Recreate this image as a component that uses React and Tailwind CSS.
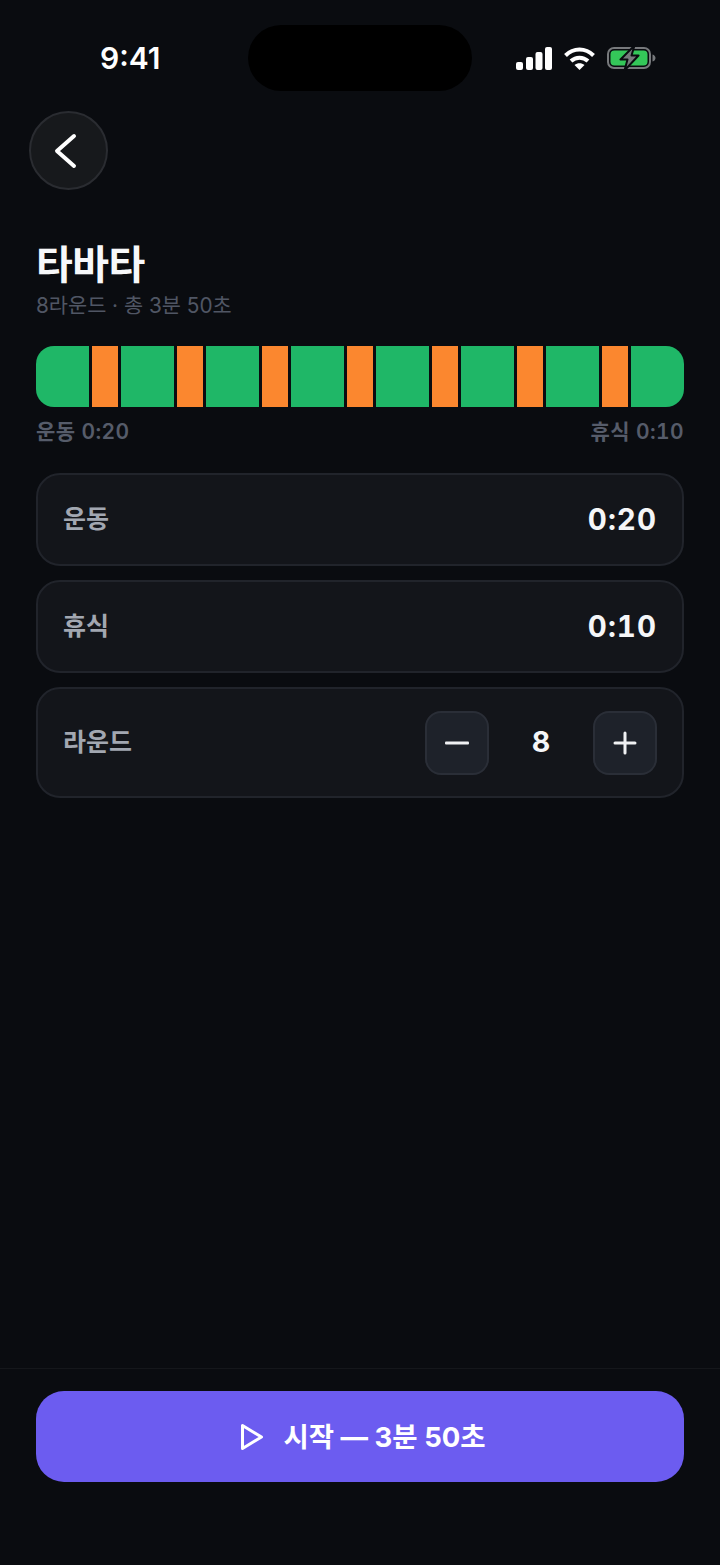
const font = { fontFamily: '"Inter","Noto Sans CJK KR",sans-serif' };

function Signal() {
  return (
    <svg width="36" height="23" viewBox="0 0 36 23" fill="#fff">
      <rect x="0" y="15" width="7" height="8" rx="2" />
      <rect x="10" y="10" width="7" height="13" rx="2" />
      <rect x="19.5" y="5" width="7" height="18" rx="2" />
      <rect x="29" y="0" width="7" height="23" rx="2" />
    </svg>
  );
}

function Wifi() {
  return (
    <svg width="31" height="23" viewBox="0 0 31 23" fill="none" stroke="#fff" strokeWidth="4">
      <path d="M1.5 8.5C9.5 0.5 21.5 0.5 29.5 8.5" />
      <path d="M7 14C12 9.5 19 9.500 24 14" />
      <path d="M15.500 23L10.500 18C13.500 15.800 17.500 15.800 20.500 18Z" fill="#fff" stroke="none" />
    </svg>
  );
}

function Battery() {
  return (
    <svg width="49" height="26" viewBox="0 0 49 26" fill="none">
      <rect x="1" y="3" width="42" height="20" rx="6" stroke="#77797c" strokeWidth="2" />
      <rect x="3.500" y="5.500" width="37" height="15" rx="4" fill="#34c759" />
      <path d="M45.500 9.500C47.500 10 48.500 11.500 48.500 13C48.500 14.500 47.500 16 45.500 16.500Z" fill="#77797c" />
      <path d="M27.500 0.500L13.500 14.500H20.500L17.500 25.500L31.500 10.500H24.500Z" fill="#77797c" stroke="#0a0c10" strokeWidth="2" strokeLinejoin="round" />
    </svg>
  );
}

function Row({ label, value }) {
  return (
    <div className="h-[93px] rounded-[24px] border-2 border-[#21242b] bg-[#13151a] px-[25px] flex items-center justify-between">
      <span className="text-[25px] font-semibold text-[#a2a7b1]">{label}</span>
      <span className="text-[29.5px] font-bold text-[#f5f6f8] tabular-nums tracking-[1px]">{value}</span>
    </div>
  );
}

function StepButton({ children }) {
  return (
    <button className="w-[64px] h-[64px] rounded-[16px] border-2 border-[#2a2e37] bg-[#1e222a] flex items-center justify-center">
      {children}
    </button>
  );
}

const segments = [2, 1, 2, 1, 2, 1, 2, 1, 2, 1, 2, 1, 2, 1, 2];

export default function App() {
  return (
    <div className="w-[720px] h-[1565px] bg-[#0a0c10] flex flex-col overflow-hidden" style={font}>
      <div className="h-[66px] mt-[25px] shrink-0 flex items-center pl-[100px]">
        <span className="text-[30px] font-semibold text-white w-[148px]">9:41</span>
        <div className="w-[224px] h-[66px] rounded-[33px] bg-black" />
        <div className="flex items-center gap-[12px] ml-[44px]">
          <Signal />
          <Wifi />
          <Battery />
        </div>
      </div>

      <div className="flex-1 flex flex-col">
        <button className="ml-[29px] mt-[20px] w-[79px] h-[79px] rounded-full border-2 border-[#2a2c31] bg-[#17191c] flex items-center justify-center">
          <svg width="26" height="36" viewBox="0 0 26 36" fill="none" stroke="#fff" strokeWidth="4" strokeLinecap="round" strokeLinejoin="round" className="-ml-[5px]">
            <path d="M21 3L4 18L21 33" />
          </svg>
        </button>

        <div className="px-[36px]">
          <h1 className="mt-[47px] text-[40px] leading-[56px] font-bold text-[#f7f8fa] tracking-[-0.5px]">타바타</h1>
          <p className="-mt-[1px] text-[20.8px] leading-[28px] text-[#505664]">8라운드 · 총 3분 50초</p>

          <div className="mt-[26px] h-[61px] rounded-[18px] overflow-hidden flex gap-[3px]">
            {segments.map((s, i) => (
              <div key={i} className={s === 2 ? "flex-[2] bg-[#1fb767]" : "flex-[1] bg-[#fb872f]"} />
            ))}
          </div>
          <div className="mt-[10px] flex justify-between text-[21px] leading-[30px] font-semibold text-[#565c6a] tabular-nums tracking-[0.4px]">
            <span>운동 0:20</span>
            <span>휴식 0:10</span>
          </div>

          <div className="mt-[26px] flex flex-col gap-[14px]">
            <Row label="운동" value="0:20" />
            <Row label="휴식" value="0:10" />
            <div className="h-[111px] rounded-[24px] border-2 border-[#21242b] bg-[#13151a] px-[25px] flex items-center justify-between">
              <span className="text-[25px] font-semibold text-[#a2a7b1]">라운드</span>
              <div className="flex items-center">
                <StepButton>
                  <svg width="24" height="4" viewBox="0 0 24 4"><rect width="24" height="3" y="0.5" rx="1" fill="#f0f1f3" /></svg>
                </StepButton>
                <span className="w-[104px] text-center text-[28.5px] font-bold text-[#f5f6f8]">8</span>
                <StepButton>
                  <svg width="24" height="24" viewBox="0 0 24 24" fill="none" stroke="#f0f1f3" strokeWidth="3" strokeLinecap="round">
                    <path d="M12 2V22M2 12H22" />
                  </svg>
                </StepButton>
              </div>
            </div>
          </div>
        </div>
      </div>

      <div className="h-[197px] shrink-0 border-t border-[#15171b] px-[36px] pt-[22px]">
        <button className="w-full h-[91px] rounded-[28px] bg-[#6c5cf0] flex items-center justify-center gap-[19px] pl-[6px]">
          <svg width="24" height="28" viewBox="0 0 24 28" fill="none" stroke="#fff" strokeWidth="3" strokeLinejoin="round">
            <path d="M2.500 2.500V25.500L21.500 14Z" />
          </svg>
          <span className="text-[27.5px] font-bold text-white pt-[2px]">시작 — 3분 50초</span>
        </button>
      </div>
    </div>
  );
}
